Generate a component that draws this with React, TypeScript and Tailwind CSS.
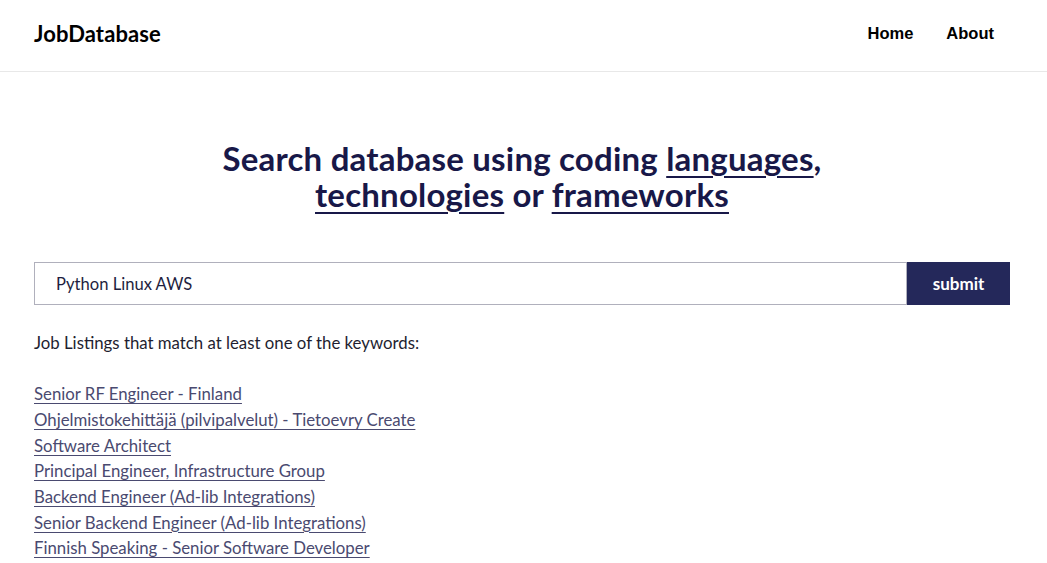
import React from 'react';

const jobs = [
  "Senior RF Engineer - Finland",
  "Ohjelmistokehittäjä (pilvipalvelut) - Tietoevry Create",
  "Software Architect",
  "Principal Engineer, Infrastructure Group",
  "Backend Engineer (Ad-lib Integrations)",
  "Senior Backend Engineer (Ad-lib Integrations)",
  "Finnish Speaking - Senior Software Developer"
];

export default function App() {
  return (
    <div className="min-h-screen bg-white font-['Lato',sans-serif] text-[#1e1e30]">
      <header className="h-[72px] border-b border-[#e8e8e8] flex items-center justify-between pl-[34px] pr-[53px] pb-[5px]">
        <a href="#" className="text-[22px] font-bold text-black tracking-[0.1px]">JobDatabase</a>
        <nav className="flex gap-[33px] font-['Liberation_Sans',sans-serif] font-bold text-[16.5px] text-black">
          <a href="#">Home</a>
          <a href="#">About</a>
        </nav>
      </header>

      <main className="px-[34px] max-w-[1044px]">
        <h1 className="mt-[68px] text-center text-[33px] leading-[36px] font-bold text-[#181848] tracking-[0.2px]">
          Search database using coding <a href="#" className="underline underline-offset-[5px] decoration-2">languages</a>,<br />
          <a href="#" className="underline underline-offset-[5px] decoration-2">technologies</a> or{' '}
          <a href="#" className="underline underline-offset-[5px] decoration-2">frameworks</a>
        </h1>

        <form className="mt-[50px] flex" onSubmit={e => e.preventDefault()}>
          <input
            defaultValue="Python Linux AWS"
            className="flex-1 h-[43px] border border-[#b0b0bc] px-[21px] text-[16.6px] text-[#1e1e40] outline-none"
          />
          <button type="submit" className="w-[103px] h-[43px] bg-[#24285a] text-white font-bold text-[17px]">
            submit
          </button>
        </form>

        <p className="mt-[25px] text-[16.8px]">Job Listings that match at least one of the keywords:</p>

        <ul className="mt-[26px] text-[16.8px] leading-[25.67px]">
          {jobs.map((job, idx) => (
            <li key={idx}>
              <a href="#" className="underline underline-offset-[3px] text-[#4a4a70]">{job}</a>
            </li>
          ))}
        </ul>
      </main>
    </div>
  );
}
